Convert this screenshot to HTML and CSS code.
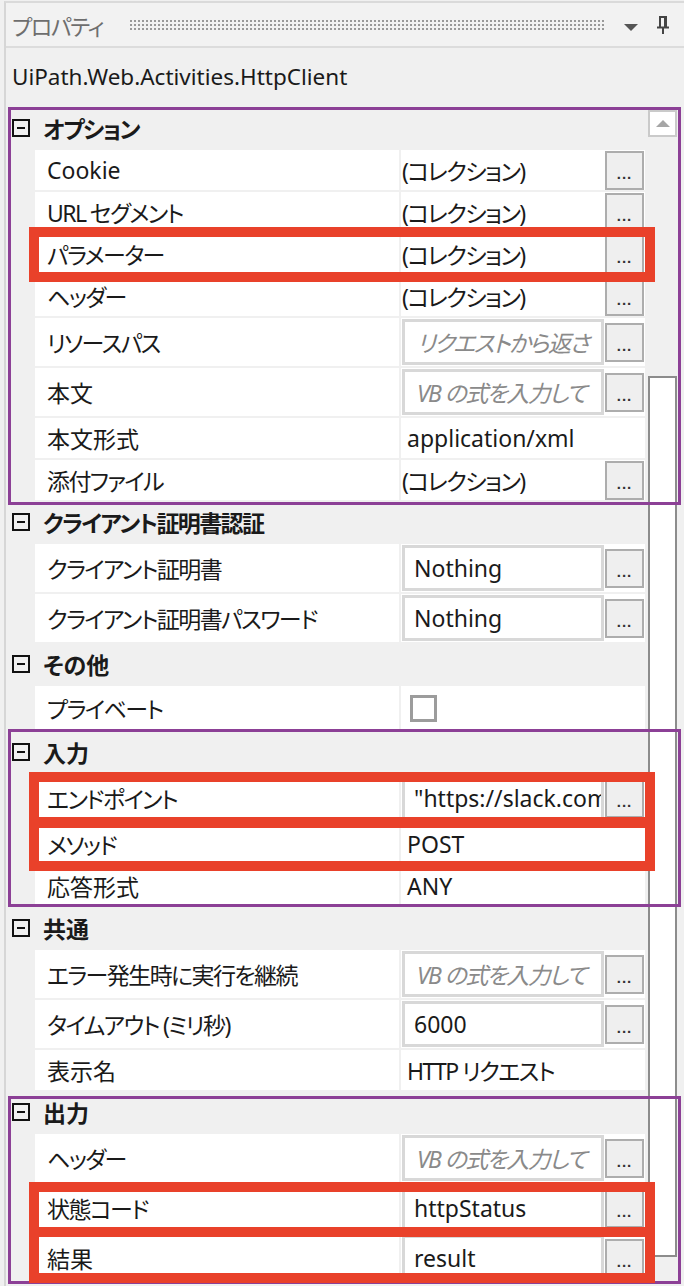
FILE: index.html
```html
<!DOCTYPE html>
<html lang="ja">
<head>
    <meta charset="UTF-8">
    <meta name="viewport" content="width=device-width, initial-scale=1.0">
    <title>プロパティ</title>
    <link rel="stylesheet" href="styles.css">
</head>
<body>
    <div class="pane">
        <!-- Title bar -->
        <div class="titlebar">
            <span class="title">プロパティ</span>
            <span class="grip"></span>
            <svg class="drop" width="14" height="7" viewBox="0 0 14 7"><path d="M0 0h14L7 7z" fill="#555"/></svg>
            <svg class="pin" width="14" height="20" viewBox="0 0 14 20">
                <path d="M4 2h6M4 1v11M9 1v11M10 1v11M1 12.5h12M7 13v6" stroke="#444" stroke-width="2" fill="none"/>
            </svg>
        </div>

        <div class="typename">UiPath.Web.Activities.HttpClient</div>

        <div class="grid">
            <div class="rows">
                <!-- Options -->
                <div class="section boxed box-options">
                    <div class="cat kana"><span class="toggle"></span>オプション</div>
                    <div class="row">
                        <div class="name">Cookie</div>
                        <div class="value"><span class="text coll kana">(コレクション)</span><span class="btn">...</span></div>
                    </div>
                    <div class="row">
                        <div class="name kana">URL セグメント</div>
                        <div class="value"><span class="text coll kana">(コレクション)</span><span class="btn">...</span></div>
                    </div>
                    <div class="row mark mark-param">
                        <div class="name kana">パラメーター</div>
                        <div class="value"><span class="text coll kana">(コレクション)</span><span class="btn">...</span></div>
                    </div>
                    <div class="row">
                        <div class="name kana">ヘッダー</div>
                        <div class="value"><span class="text coll kana">(コレクション)</span><span class="btn">...</span></div>
                    </div>
                    <div class="row tall">
                        <div class="name kana">リソースパス</div>
                        <div class="value"><span class="tb ph kana">リクエストから返さ</span><span class="btn">...</span></div>
                    </div>
                    <div class="row tall">
                        <div class="name">本文</div>
                        <div class="value"><span class="tb ph kana">VB の式を入力して</span><span class="btn">...</span></div>
                    </div>
                    <div class="row">
                        <div class="name">本文形式</div>
                        <div class="value"><span class="text">application/xml</span></div>
                    </div>
                    <div class="row">
                        <div class="name kana">添付ファイル</div>
                        <div class="value"><span class="text coll kana">(コレクション)</span><span class="btn">...</span></div>
                    </div>
                </div>

                <!-- Client certificate -->
                <div class="section">
                    <div class="cat kana"><span class="toggle"></span>クライアント証明書認証</div>
                    <div class="row tall">
                        <div class="name kana">クライアント証明書</div>
                        <div class="value"><span class="tb">Nothing</span><span class="btn">...</span></div>
                    </div>
                    <div class="row tall">
                        <div class="name kana">クライアント証明書パスワード</div>
                        <div class="value"><span class="tb">Nothing</span><span class="btn">...</span></div>
                    </div>
                </div>

                <!-- Misc -->
                <div class="section">
                    <div class="cat"><span class="toggle"></span>その他</div>
                    <div class="row check-row">
                        <div class="name kana">プライベート</div>
                        <div class="value"><span class="checkbox"></span></div>
                    </div>
                </div>

                <!-- Input -->
                <div class="section boxed box-input">
                    <div class="cat"><span class="toggle"></span>入力</div>
                    <div class="row tall mark mark-endpoint">
                        <div class="name kana">エンドポイント</div>
                        <div class="value"><span class="tb">"https://slack.com</span><span class="btn">...</span></div>
                    </div>
                    <div class="row mark mark-method">
                        <div class="name kana">メソッド</div>
                        <div class="value"><span class="text">POST</span></div>
                    </div>
                    <div class="row">
                        <div class="name">応答形式</div>
                        <div class="value"><span class="text">ANY</span></div>
                    </div>
                </div>

                <!-- Common -->
                <div class="section">
                    <div class="cat"><span class="toggle"></span>共通</div>
                    <div class="row tall">
                        <div class="name kana">エラー発生時に実行を継続</div>
                        <div class="value"><span class="tb ph kana">VB の式を入力して</span><span class="btn">...</span></div>
                    </div>
                    <div class="row tall">
                        <div class="name kana">タイムアウト (ミリ秒)</div>
                        <div class="value"><span class="tb">6000</span><span class="btn">...</span></div>
                    </div>
                    <div class="row">
                        <div class="name">表示名</div>
                        <div class="value"><span class="text kana">HTTP リクエスト</span></div>
                    </div>
                </div>

                <!-- Output -->
                <div class="section boxed box-output">
                    <div class="cat"><span class="toggle"></span>出力</div>
                    <div class="row tall">
                        <div class="name kana">ヘッダー</div>
                        <div class="value"><span class="tb ph kana">VB の式を入力して</span><span class="btn">...</span></div>
                    </div>
                    <div class="row tall mark mark-status">
                        <div class="name kana">状態コード</div>
                        <div class="value"><span class="tb">httpStatus</span><span class="btn">...</span></div>
                    </div>
                    <div class="row tall mark mark-result">
                        <div class="name">結果</div>
                        <div class="value"><span class="tb">result</span><span class="btn">...</span></div>
                    </div>
                </div>
            </div>

            <!-- Vertical scrollbar -->
            <div class="scrollbar">
                <div class="sb-up">
                    <svg width="14" height="7" viewBox="0 0 14 7"><path d="M0 7h14L7 0z" fill="#a6a6a6"/></svg>
                </div>
                <div class="sb-thumb"></div>
            </div>
        </div>
    </div>
</body>
</html>
```

FILE: styles.css
```css
body {
    margin: 0;
    width: 684px;
    height: 1286px;
    overflow: hidden;
    background-color: #f0f0f0;
    font-family: "Noto Sans", "Noto Sans CJK JP", sans-serif;
    font-size: 23px;
    color: #1a1a1a;
    font-feature-settings: "palt";
}
.kana {
    letter-spacing: -1.6px;
}
.pane {
    margin: 1px 0 0 4px;
    border-top: 2px solid #dadada;
    border-left: 2px solid #d6d6d6;
}
.titlebar {
    display: flex;
    align-items: center;
    height: 43px;
    padding: 0 14px 0 6px;
    background-color: #f2f2f2;
    border-bottom: 2px solid #dcdcdc;
}
.title {
    font-size: 22px;
    letter-spacing: -1.4px;
    color: #6e6e6e;
}
.grip {
    flex: 1;
    height: 11px;
    margin: 0 18px 0 26px;
    background-image: radial-gradient(circle, #999 0.9px, transparent 1.3px);
    background-size: 4px 4px;
}
.drop {
    margin: 6px 18px 0 0;
}
.typename {
    display: flex;
    align-items: center;
    height: 56px;
    padding: 0 0 4px 6px;
    font-size: 22.5px;
}
.grid {
    display: flex;
    margin-left: 1px;
    height: 1178px;
}
.rows {
    width: 638px;
    display: flex;
    flex-direction: column;
    gap: 2px;
}
.section {
    display: flex;
    flex-direction: column;
    gap: 2px;
    position: relative;
}
.boxed::after {
    content: "";
    position: absolute;
    left: 1px;
    right: -36px;
    border: 3px solid #8c4096;
    z-index: 2;
}
.box-options::after { top: -1px; bottom: -5px; }
.box-input::after { top: -3px; bottom: -1px; }
.box-output::after { top: 4px; bottom: -2px; }

.cat {
    display: flex;
    align-items: center;
    height: 40px;
    font-weight: 700;
}
.toggle {
    position: relative;
    width: 18px;
    height: 18px;
    margin: 0 13px 0 5px;
    box-sizing: border-box;
    border: 2px solid #111;
}
.toggle::before {
    content: "";
    position: absolute;
    left: 3px;
    right: 3px;
    top: 6px;
    height: 2px;
    background-color: #111;
}
.row {
    position: relative;
    display: grid;
    grid-template-columns: 364px 244px;
    column-gap: 2px;
    height: 40px;
    margin-left: 28px;
}
.row.tall {
    height: 48px;
}
.row.check-row {
    height: 44px;
}
.name, .value {
    background-color: #fff;
    display: flex;
    align-items: center;
    white-space: nowrap;
    overflow: hidden;
}
.name {
    padding-left: 12px;
}
.text {
    padding-left: 6px;
}
.text.coll {
    padding-left: 1px;
}
.tb {
    box-sizing: border-box;
    width: 202px;
    height: 46px;
    margin-left: 1px;
    padding-left: 9px;
    border: 3px solid #d8d8d8;
    background-color: #fff;
    display: flex;
    align-items: center;
    overflow: hidden;
    white-space: nowrap;
}
.tb.ph {
    padding-left: 12px;
    font-style: italic;
    color: #8a8a8a;
}
.btn {
    box-sizing: border-box;
    width: 39px;
    height: 39px;
    margin-left: auto;
    margin-right: 1px;
    border: 2px solid #adadad;
    background-color: #efefef;
    display: flex;
    justify-content: center;
    align-items: flex-end;
    padding-bottom: 7px;
    font-family: "Liberation Sans", sans-serif;
    font-size: 15px;
    font-weight: 700;
    line-height: 1;
    letter-spacing: 1px;
    color: #333;
}
.checkbox {
    box-sizing: border-box;
    width: 27px;
    height: 27px;
    margin-left: 9px;
    border: 3px solid #9c9c9c;
}
.mark::after {
    content: "";
    position: absolute;
    left: -6px;
    right: -10px;
    border: 10px solid #e9412a;
    z-index: 3;
}
.mark-param::after { top: -7px; bottom: -8px; }
.mark-endpoint::after { top: -2px; bottom: -6px; }
.mark-method::after { top: -7px; bottom: -7px; }
.mark-status::after { top: -2px; bottom: -5px; }
.mark-result::after { top: -7px; bottom: -1px; }

.scrollbar {
    width: 32px;
    display: flex;
    flex-direction: column;
}
.sb-up {
    box-sizing: border-box;
    width: 29px;
    height: 27px;
    margin: 2px 0 0 3px;
    border: 2px solid #cacaca;
    background-color: #fff;
    display: flex;
    align-items: center;
    justify-content: center;
}
.sb-thumb {
    box-sizing: border-box;
    width: 29px;
    height: 881px;
    margin: 239px 0 0 3px;
    border: 2px solid #8c8c8c;
    background-color: #fff;
}
```
